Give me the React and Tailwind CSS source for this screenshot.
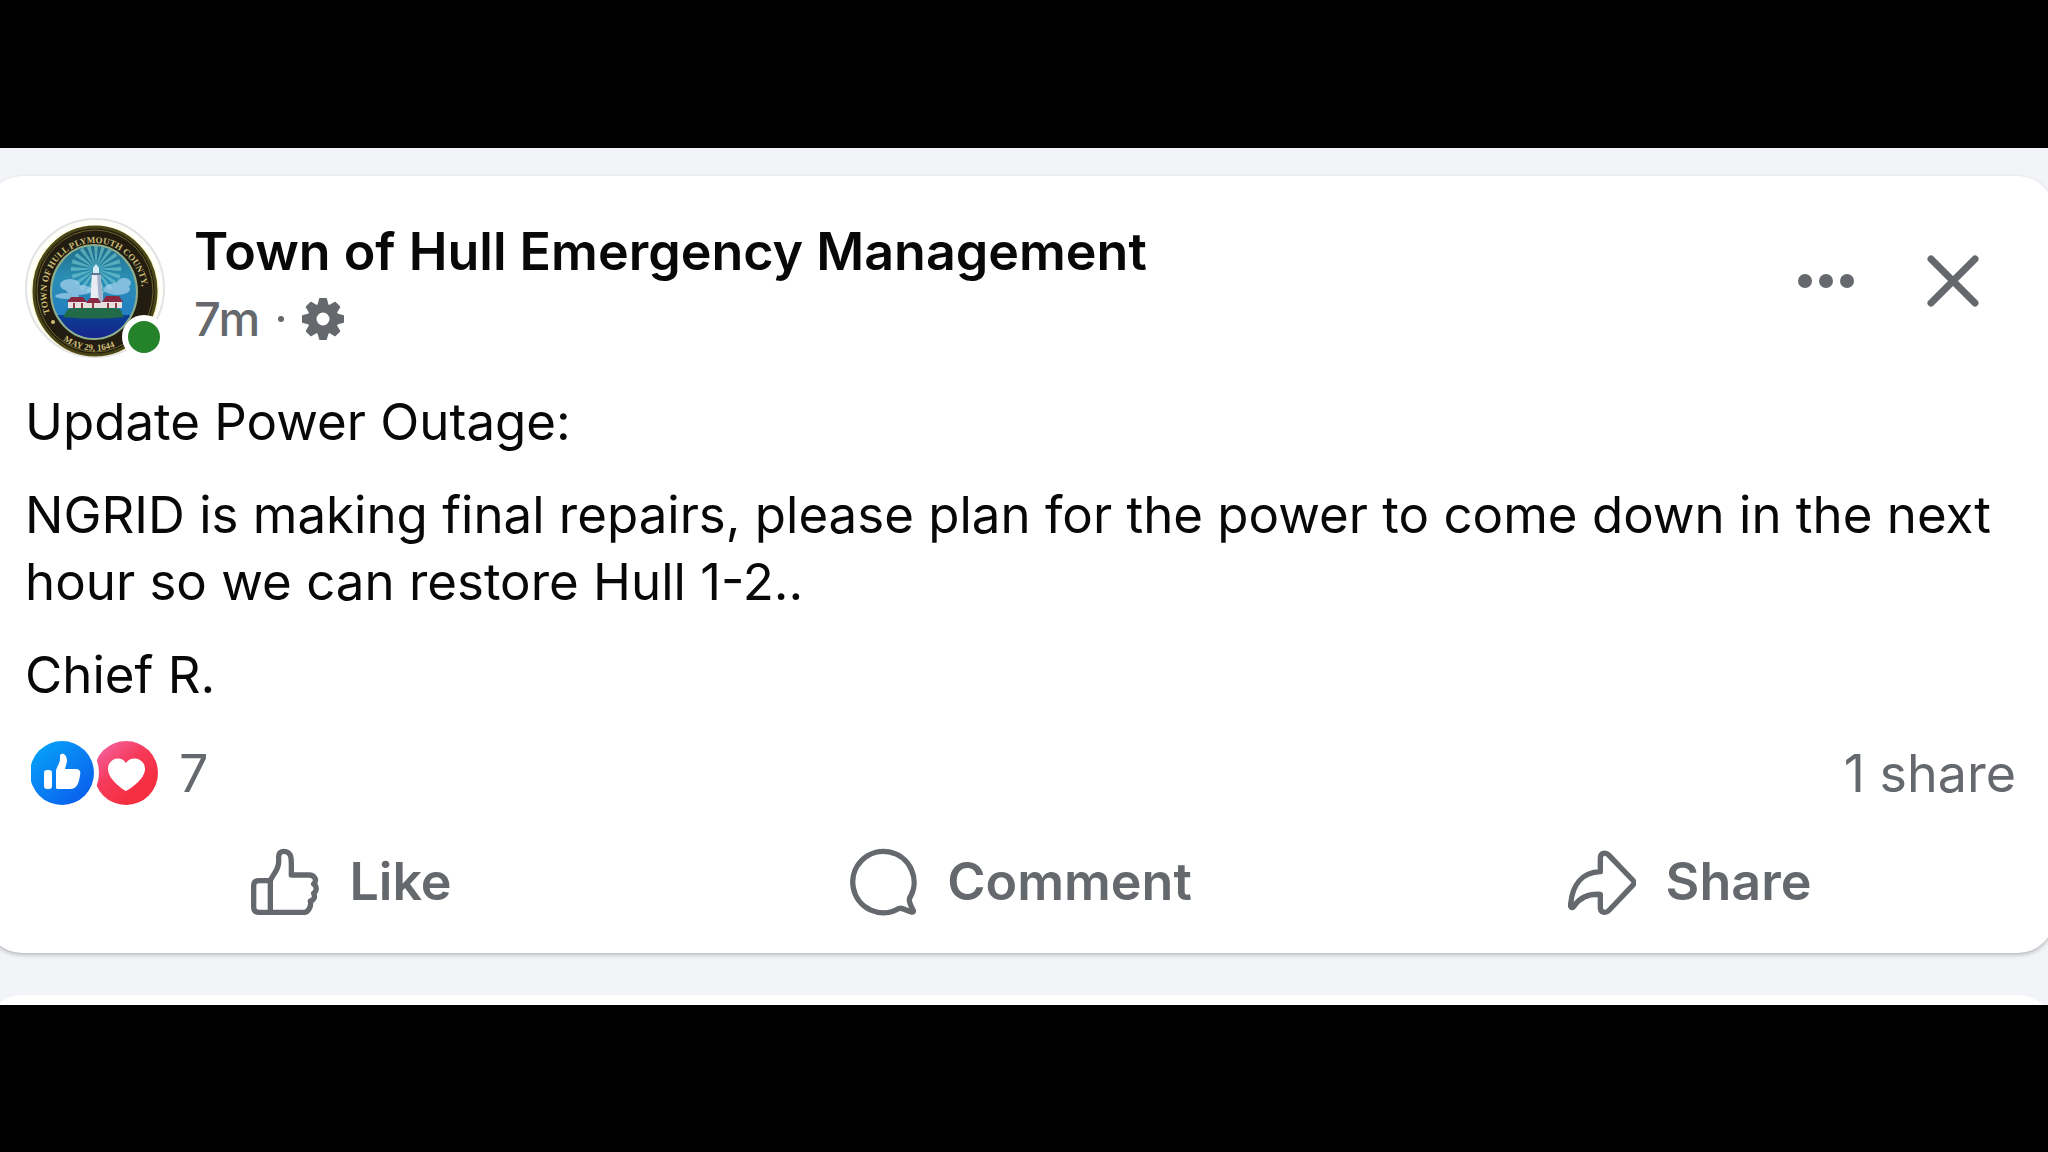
import { useState } from "react";

const RAYS = Array.from({ length: 20 }, (_, i) => (i * 360) / 20);
const TEETH = [0, 45, 90, 135, 180, 225, 270, 315];

const SealAvatar = () => (
  <svg
    viewBox="0 0 140 140"
    className="w-[140px] h-[140px]"
    role="img"
    aria-label="Town seal"
  >
    <defs>
      <linearGradient id="sky" x1="0" y1="0" x2="0" y2="1">
        <stop offset="0" stopColor="#1f6c88" />
        <stop offset="0.35" stopColor="#2b8fb4" />
        <stop offset="0.7" stopColor="#2480c0" />
      </linearGradient>
      <linearGradient id="sea" x1="0" y1="0" x2="0" y2="1">
        <stop offset="0" stopColor="#0d3f93" />
        <stop offset="1" stopColor="#1a1788" />
      </linearGradient>
      <clipPath id="scene">
        <ellipse cx="69" cy="74" rx="42" ry="46" />
      </clipPath>
      <path id="topArc" d="M 25 95 A 48 51 0 1 1 114 95" />
      <path id="bottomArc" d="M 28 113 A 56 59 0 0 0 116 107" />
    </defs>
    <circle cx="70" cy="70" r="69" fill="#fffffa" stroke="#e2e3e4" strokeWidth="2" />
    <ellipse cx="70" cy="73" rx="64" ry="66" fill="#fbf9cf" />
    <ellipse cx="70" cy="73" rx="61" ry="64" fill="#221d10" stroke="#4b4618" strokeWidth="3" />
    <ellipse cx="70" cy="73" rx="58" ry="61" fill="none" stroke="#6b6328" strokeWidth="1" />
    <ellipse cx="69" cy="74" rx="43" ry="47" fill="url(#sky)" stroke="#8fae8c" strokeWidth="2" />
    <g clipPath="url(#scene)">
      {RAYS.map((deg) => (
        <path
          key={deg}
          d="M71 51 L69 26 L73 26 Z"
          fill="#79cdd0"
          opacity="0.6"
          transform={`rotate(${deg} 71 51)`}
        />
      ))}
      <g fill="#a9d3ee" opacity="0.7">
        <ellipse cx="45" cy="67" rx="10" ry="6" />
        <ellipse cx="54" cy="72" rx="13" ry="5" />
        <ellipse cx="92" cy="71" rx="13" ry="6" />
        <ellipse cx="99" cy="65" rx="7" ry="5" />
        <ellipse cx="42" cy="78" rx="12" ry="3" />
      </g>
      <rect x="20" y="97" width="100" height="34" fill="url(#sea)" />
      <path d="M38 99 L43 91 Q70 86 95 91 L99 99 Q70 102 38 99 Z" fill="#216b48" />
      <path d="M67 55 H75 L79 88 H65 Z" fill="#e9edf3" />
      <path d="M72 55 H75 L79 88 H74 Z" fill="#a2b2cb" />
      <path d="M68 55 V50 L71 46 L74 50 V55 Z" fill="#d5eaf2" />
      <path d="M66 56 H76" stroke="#5b7899" strokeWidth="2" />
      <path d="M43 84 H97 V90 H43 Z" fill="#e8dfdf" />
      <path d="M42 84 L46 79 H58 L62 84 Z M61 85 L65 80 H73 L76 85 Z M77 84 L81 78 H94 L98 84 Z" fill="#8a2942" />
      <path d="M49 85 V90 M57 85 V90 M68 85 V90 M83 85 V90 M91 85 V90" stroke="#923c48" strokeWidth="2" />
    </g>
    <g
      fill="#cdbd78"
      fontFamily="Liberation Serif, serif"
      fontWeight="700"
      fontSize="9"
    >
      <text>
        <textPath href="#topArc">TOWN OF HULL PLYMOUTH COUNTY,</textPath>
      </text>
      <text>
        <textPath href="#bottomArc" startOffset="14">
          MAY 29, 1644
        </textPath>
      </text>
    </g>
    <circle cx="28" cy="104" r="2" fill="#cdbd78" />
  </svg>
);

const GearIcon = () => (
  <svg viewBox="0 0 42 42" className="w-[42px] h-[42px]" fill="#65686c" aria-hidden="true">
    {TEETH.map((deg) => (
      <path
        key={deg}
        d="M15 9 L17 1 Q17 0 18 0 H24 Q25 0 25 1 L27 9 Z"
        transform={`rotate(${deg} 21 21)`}
      />
    ))}
    <circle cx="21" cy="21" r="11" fill="none" stroke="#65686c" strokeWidth="9" />
  </svg>
);

const Reactions = () => (
  <svg viewBox="0 0 128 64" className="w-32 h-16" role="img" aria-label="Like and Love">
    <defs>
      <linearGradient id="blue" x1="0.1" y1="0.1" x2="0.8" y2="0.9">
        <stop offset="0" stopColor="#06a0f8" />
        <stop offset="1" stopColor="#0a62ee" />
      </linearGradient>
      <linearGradient id="red" x1="0.1" y1="0.1" x2="0.7" y2="0.8">
        <stop offset="0" stopColor="#f5609c" />
        <stop offset="0.5" stopColor="#f63a5a" />
        <stop offset="1" stopColor="#f52e40" />
      </linearGradient>
    </defs>
    <circle cx="95" cy="32" r="32" fill="url(#red)" />
    <path
      d="M95 50 C91 48 77 38 77 28 C77 17 90 14 95 22 C100 14 114 17 114 28 C114 38 99 48 95 50 Z"
      fill="#fff"
    />
    <circle cx="31" cy="32" r="37" fill="#fff" />
    <circle cx="31" cy="32" r="32" fill="url(#blue)" />
    <rect x="13" y="29" width="8" height="19" rx="3" fill="#fff" />
    <path
      d="M25 47 V30 C25 27 28 24 29 19 V15 C29 12 35 11 36 19 C36 22 35 24 34 28 H45 C49 28 50 31 49 34 C48 42 46 48 39 48 H26 Z"
      fill="#fff"
    />
  </svg>
);

const LikeIcon = () => (
  <>
    <path d="M58 98 H24 Q8 98 8 114 V177 Q8 193 24 193 H58 Z" />
    <path d="M58 98 C62 84 83 67 83 42 V25 C83 5 112 5 119 25 C122 34 121 50 121 81 H174 C190 81 200 96 188 108 C199 115 197 130 188 136 C193 146 190 156 178 159 C182 173 172 193 160 193 H58" />
  </>
);

const CommentIcon = () => (
  <path d="M151 181 A92 92 0 1 1 182 150 C177 162 190 180 193 188 Q194 193 188 192 C176 190 163 179 151 181 Z" />
);

const ShareIcon = () => (
  <path d="M97 71 V30 C97 14 113 12 122 21 L194 96 Q202 104 194 112 L124 186 C113 198 97 194 97 179 V139 C60 137 36 149 20 172 C14 182 6 180 8 168 C13 111 42 73 97 71 Z" />
);

const ActionButton = ({ label, children, ...props }) => (
  <button
    type="button"
    className="flex-1 flex items-center justify-center gap-[30px] h-[86px] font-semibold text-[#65686c] rounded-lg"
    {...props}
  >
    <svg
      viewBox="0 0 204 204"
      className="w-[68px] h-[68px]"
      fill="none"
      stroke="currentColor"
      strokeWidth="16"
      strokeLinejoin="round"
      aria-hidden="true"
    >
      {children}
    </svg>
    {label}
  </button>
);

const Post = () => {
  const [liked, setLiked] = useState(false);

  return (
    <article className="-ml-3.5 -mr-1.5 pl-[39px] pr-[38px] pt-[42px] pb-7 bg-white rounded-[36px] shadow-[0_2px_4px_rgba(0,0,0,0.25)]">
      <header className="flex items-start">
        <div className="relative shrink-0">
          <SealAvatar />
          <span className="absolute left-[97px] top-[97px] w-11 h-11 rounded-full border-[6px] border-white bg-[#24832a]"></span>
        </div>
        <div className="ml-[29px] grow">
          <h2 className="text-[52px] leading-[68px] font-semibold text-[#080809]">
            Town of Hull Emergency Management
          </h2>
          <div className="flex items-center gap-[18px] text-[47px] leading-[66px] font-medium text-[#65686c]">
            <a href="#post">7m</a>
            <span className="w-1.5 h-1.5 rounded-full bg-[#65686c]"></span>
            <GearIcon />
          </div>
        </div>
        <div className="flex items-center gap-[59px] pt-8 pr-8 text-[#65686c]">
          <button type="button" aria-label="More options" className="p-2">
            <svg viewBox="0 0 58 62" className="w-[58px] h-[62px]" fill="currentColor">
              <circle cx="8" cy="23" r="7" />
              <circle cx="29" cy="23" r="7" />
              <circle cx="50" cy="23" r="7" />
            </svg>
          </button>
          <button type="button" aria-label="Close" className="p-1">
            <svg
              viewBox="0 0 54 62"
              className="w-[54px] h-[62px] overflow-visible"
              stroke="currentColor"
              strokeWidth="7"
              strokeLinecap="round"
            >
              <path d="M5 1 L49 45 M49 1 L5 45" />
            </svg>
          </button>
        </div>
      </header>

      <div className="flex flex-col gap-[26px] mt-[30px] text-[51px] text-[#080809]">
        <p>Update Power Outage:</p>
        <p>
          NGRID is making final repairs, please plan for the power to come down
          in the next hour so we can restore Hull 1-2..
        </p>
        <p>Chief R.</p>
      </div>

      <div className="flex items-center mt-8 pl-1.5 text-[#65686c]">
        <Reactions />
        <span className="ml-5">7</span>
        <span className="ml-auto">1 share</span>
      </div>

      <div className="flex -mx-2 mt-8">
        <ActionButton
          label="Like"
          aria-pressed={liked}
          onClick={() => setLiked(!liked)}
        >
          <LikeIcon />
        </ActionButton>
        <ActionButton label="Comment">
          <CommentIcon />
        </ActionButton>
        <ActionButton label="Share">
          <ShareIcon />
        </ActionButton>
      </div>
    </article>
  );
};

const App = () => (
  <div className="flex flex-col justify-center min-h-screen overflow-hidden bg-black">
    <main className="pt-7 overflow-hidden bg-[#f2f4f8] font-['Inter',sans-serif] text-[52px] leading-[67px]">
      <Post />
      <div className="-ml-3.5 -mr-1.5 mt-[42px] h-2.5 overflow-hidden">
        <div className="h-20 bg-white rounded-[36px]"></div>
      </div>
    </main>
  </div>
);

export default App;
